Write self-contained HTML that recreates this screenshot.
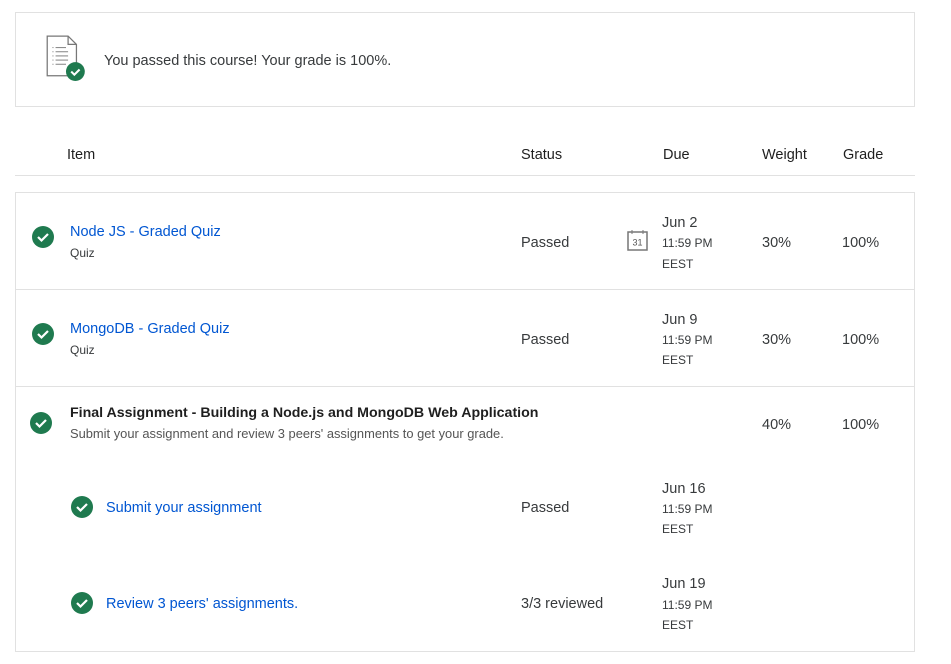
<!DOCTYPE html>
<html><head><meta charset="utf-8"><style>
body{margin:0;width:951px;height:664px;background:#fff;position:relative;font-family:"Liberation Sans",sans-serif;color:#1f1f1f;overflow:hidden}
.a{position:absolute;white-space:nowrap}
.box{position:absolute;border:1px solid #e1e1e1;box-sizing:border-box}
.t{font-size:14.5px;color:#373a3c;margin-top:2px}
.l{font-size:14.5px;color:#0056d2;margin-top:2px}
.s{font-size:12px;color:#373a3c}
.h{font-size:14.5px;color:#1f1f1f;margin-top:2px}
.line{position:absolute;height:1px;background:#e1e1e1}
svg.c{position:absolute;width:22px;height:22px}
</style></head><body>
<div class="box" style="left:15px;top:12px;width:900px;height:95px"></div>
<svg class="a" style="left:45px;top:34px" width="42" height="48" viewBox="0 0 40 46">
<path d="M2 2h20l8 8v30H2z" fill="#fff" stroke="#777" stroke-width="1.2"/>
<path d="M22 2v8h8" fill="none" stroke="#777" stroke-width="1.2"/>
<g stroke="#888" stroke-width="1"><line x1="7" y1="13" x2="8" y2="13"/><line x1="10" y1="13" x2="20" y2="13"/><line x1="7" y1="17" x2="8" y2="17"/><line x1="10" y1="17" x2="22" y2="17"/><line x1="7" y1="21" x2="8" y2="21"/><line x1="10" y1="21" x2="22" y2="21"/><line x1="7" y1="25" x2="8" y2="25"/><line x1="10" y1="25" x2="22" y2="25"/><line x1="7" y1="29" x2="8" y2="29"/><line x1="10" y1="29" x2="20" y2="29"/></g>
<circle cx="29" cy="36" r="9" fill="#1f7a4f"/><path d="M25 36l3 3 5-5" fill="none" stroke="#fff" stroke-width="2"/>
</svg>
<div class="a t" style="left:104px;top:51px">You passed this course! Your grade is 100%.</div>

<div class="a h" style="left:67px;top:145px">Item</div>
<div class="a h" style="left:521px;top:145px">Status</div>
<div class="a h" style="left:663px;top:145px">Due</div>
<div class="a h" style="left:762px;top:145px">Weight</div>
<div class="a h" style="left:843px;top:145px">Grade</div>
<div class="line" style="left:15px;top:175px;width:900px"></div>

<div class="box" style="left:15px;top:192px;width:900px;height:460px"></div>
<div class="line" style="left:16px;top:289px;width:898px"></div>
<div class="line" style="left:16px;top:386px;width:898px"></div>

<svg class="c" style="left:32px;top:226px" viewBox="0 0 22 22"><circle cx="11" cy="11" r="11" fill="#1f7a4f"/><path d="M6 11l3.5 3.5 6.5-6.5" fill="none" stroke="#fff" stroke-width="2.2"/></svg>
<div class="a l" style="left:70px;top:222px">Node JS - Graded Quiz</div>
<div class="a s" style="left:70px;top:246px">Quiz</div>
<div class="a t" style="left:521px;top:233px">Passed</div>
<svg class="a" style="left:627px;top:230px" width="22" height="22" viewBox="0 0 22 22"><rect x="1" y="2" width="19" height="18" fill="none" stroke="#777" stroke-width="1.5"/><line x1="5" y1="0" x2="5" y2="4" stroke="#777"/><line x1="16" y1="0" x2="16" y2="4" stroke="#777"/><text x="10.5" y="15.5" font-size="9" text-anchor="middle" fill="#555" font-family="Liberation Sans">31</text></svg>
<div class="a t" style="left:662px;top:213px">Jun 2</div>
<div class="a s" style="left:662px;top:236px">11:59 PM</div>
<div class="a s" style="left:662px;top:257px">EEST</div>
<div class="a t" style="left:762px;top:233px">30%</div>
<div class="a t" style="left:842px;top:233px">100%</div>

<svg class="c" style="left:32px;top:323px" viewBox="0 0 22 22"><circle cx="11" cy="11" r="11" fill="#1f7a4f"/><path d="M6 11l3.5 3.5 6.5-6.5" fill="none" stroke="#fff" stroke-width="2.2"/></svg>
<div class="a l" style="left:70px;top:319px">MongoDB - Graded Quiz</div>
<div class="a s" style="left:70px;top:343px">Quiz</div>
<div class="a t" style="left:521px;top:330px">Passed</div>
<div class="a t" style="left:662px;top:310px">Jun 9</div>
<div class="a s" style="left:662px;top:333px">11:59 PM</div>
<div class="a s" style="left:662px;top:353px">EEST</div>
<div class="a t" style="left:762px;top:330px">30%</div>
<div class="a t" style="left:842px;top:330px">100%</div>

<svg class="c" style="left:30px;top:412px" viewBox="0 0 22 22"><circle cx="11" cy="11" r="11" fill="#1f7a4f"/><path d="M6 11l3.5 3.5 6.5-6.5" fill="none" stroke="#fff" stroke-width="2.2"/></svg>
<div class="a" style="left:70px;top:405px;font-size:14.2px;font-weight:bold">Final Assignment - Building a Node.js and MongoDB Web Application</div>
<div class="a" style="left:70px;top:426px;font-size:12.9px;color:#555">Submit your assignment and review 3 peers' assignments to get your grade.</div>
<div class="a t" style="left:762px;top:415px">40%</div>
<div class="a t" style="left:842px;top:415px">100%</div>

<svg class="c" style="left:71px;top:496px" viewBox="0 0 22 22"><circle cx="11" cy="11" r="11" fill="#1f7a4f"/><path d="M6 11l3.5 3.5 6.5-6.5" fill="none" stroke="#fff" stroke-width="2.2"/></svg>
<div class="a l" style="left:106px;top:498px">Submit your assignment</div>
<div class="a t" style="left:521px;top:498px">Passed</div>
<div class="a t" style="left:662px;top:479px">Jun 16</div>
<div class="a s" style="left:662px;top:502px">11:59 PM</div>
<div class="a s" style="left:662px;top:522px">EEST</div>

<svg class="c" style="left:71px;top:592px" viewBox="0 0 22 22"><circle cx="11" cy="11" r="11" fill="#1f7a4f"/><path d="M6 11l3.5 3.5 6.5-6.5" fill="none" stroke="#fff" stroke-width="2.2"/></svg>
<div class="a l" style="left:106px;top:594px">Review 3 peers' assignments.</div>
<div class="a t" style="left:521px;top:594px">3/3 reviewed</div>
<div class="a t" style="left:662px;top:574px">Jun 19</div>
<div class="a s" style="left:662px;top:598px">11:59 PM</div>
<div class="a s" style="left:662px;top:618px">EEST</div>
</body></html>
